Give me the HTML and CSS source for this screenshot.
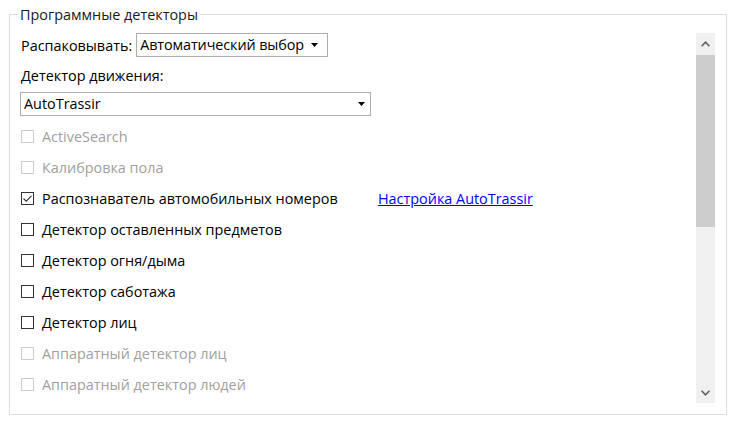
FILE: index.html
```html
<!DOCTYPE html>
<html lang="ru">
<head>
<meta charset="utf-8">
<title>Программные детекторы</title>
<link rel="stylesheet" href="styles.css">
</head>
<body>
<fieldset class="group">
  <legend class="group-title">Программные детекторы</legend>
  <div class="pane">
    <div class="content">
      <div class="unpack-row">
        <span class="field-label">Распаковывать:</span>
        <div class="select select-small">
          <span class="select-value">Автоматический выбор</span>
          <svg class="select-arrow" width="7" height="4" viewBox="0 0 7 4"><polygon points="0,0 7,0 3.5,4" fill="#000"/></svg>
        </div>
      </div>
      <div class="motion-label">Детектор движения:</div>
      <div class="select select-wide">
        <span class="select-value">AutoTrassir</span>
        <svg class="select-arrow" width="7" height="4" viewBox="0 0 7 4"><polygon points="0,0 7,0 3.5,4" fill="#000"/></svg>
      </div>
      <ul class="checks">
        <li class="check disabled"><span class="box"></span><span class="check-text">ActiveSearch</span></li>
        <li class="check disabled"><span class="box"></span><span class="check-text">Калибровка пола</span></li>
        <li class="check">
          <span class="box"><svg width="11" height="11" viewBox="0 0 11 11"><polyline points="1.5,5.5 4.2,8.2 9.5,2.8" fill="none" stroke="#333" stroke-width="1.1"/></svg></span>
          <span class="check-text check-text-wide">Распознаватель автомобильных номеров</span>
          <a class="link" href="#">Настройка AutoTrassir</a>
        </li>
        <li class="check"><span class="box"></span><span class="check-text">Детектор оставленных предметов</span></li>
        <li class="check"><span class="box"></span><span class="check-text">Детектор огня/дыма</span></li>
        <li class="check"><span class="box"></span><span class="check-text">Детектор саботажа</span></li>
        <li class="check"><span class="box"></span><span class="check-text">Детектор лиц</span></li>
        <li class="check disabled"><span class="box"></span><span class="check-text">Аппаратный детектор лиц</span></li>
        <li class="check disabled"><span class="box"></span><span class="check-text">Аппаратный детектор людей</span></li>
      </ul>
    </div>
    <div class="scrollbar">
      <div class="sb-btn sb-up">
        <svg width="9" height="6" viewBox="0 0 9 6"><polyline points="0.6,5.2 4.5,1.2 8.4,5.2" fill="none" stroke="#606060" stroke-width="1.6"/></svg>
      </div>
      <div class="sb-track"><div class="sb-thumb"></div></div>
      <div class="sb-btn sb-down">
        <svg width="9" height="6" viewBox="0 0 9 6"><polyline points="0.6,0.8 4.5,4.8 8.4,0.8" fill="none" stroke="#606060" stroke-width="1.6"/></svg>
      </div>
    </div>
  </div>
</fieldset>
</body>
</html>
```
FILE: styles.css
```css
html, body {
  margin: 0;
  padding: 0;
  background: #ffffff;
}

body {
  font-family: "Open Sans", "Noto Sans", "Liberation Sans", sans-serif;
  font-size: 14.4px;
  color: #000000;
}

.group {
  box-sizing: border-box;
  width: 718px;
  margin: 5px 0 0 9px;
  padding: 9px 11px 11px 10px;
  border: 1px solid #dcdcdc;
  min-width: 0;
}

.group-title {
  padding: 0 2px;
  margin-left: -2px;
  line-height: 19px;
  height: 19px;
  color: #1a1a1a;
}

.pane {
  display: flex;
  height: 370px;
}

.content {
  flex: 1;
  min-width: 0;
}

.unpack-row {
  display: flex;
  align-items: center;
  height: 24px;
}

.field-label {
  margin-left: 1px;
  margin-right: 4px;
  white-space: nowrap;
}

.select {
  box-sizing: border-box;
  display: flex;
  align-items: center;
  height: 24px;
  border: 1px solid #adadad;
  background: #ffffff;
}

.select-value {
  flex: none;
  white-space: nowrap;
  line-height: 22px;
}

.select-small {
  flex: none;
  width: 192px;
  padding: 0 9px 0 3px;
  letter-spacing: -0.1px;
}

.select-wide {
  width: 351px;
  padding: 0 5px 0 3px;
}

.select-arrow {
  flex: none;
  display: block;
  margin-left: auto;
}

.motion-label {
  margin-top: 7px;
  margin-left: 1px;
  height: 24px;
  line-height: 24px;
  margin-bottom: 4px;
}

.checks {
  list-style: none;
  margin: 5px 0 0 0;
  padding: 0;
}

.check {
  display: flex;
  align-items: center;
  height: 31px;
  padding-left: 1px;
}

.box {
  box-sizing: border-box;
  flex: none;
  width: 13px;
  height: 13px;
  border: 1px solid #333333;
  background: #ffffff;
  margin-right: 8px;
  display: flex;
  align-items: center;
  justify-content: center;
}

.box svg {
  display: block;
}

.check-text {
  white-space: nowrap;
}

.check-text-wide {
  width: 336px;
  flex: none;
}

.disabled .box {
  border-color: #cccccc;
}

.disabled .check-text {
  color: #a0a0a0;
}

.link {
  color: #0000ff;
  text-decoration: underline;
  white-space: nowrap;
}

.scrollbar {
  flex: none;
  width: 19px;
  display: flex;
  flex-direction: column;
  background: #f0f0f0;
}

.sb-btn {
  display: flex;
  align-items: center;
  justify-content: center;
}

.sb-btn svg {
  display: block;
}

.sb-up {
  height: 22px;
}

.sb-down {
  height: 21px;
}

.sb-track {
  flex: 1;
}

.sb-thumb {
  height: 172px;
  background: #cdcdcd;
}
```
